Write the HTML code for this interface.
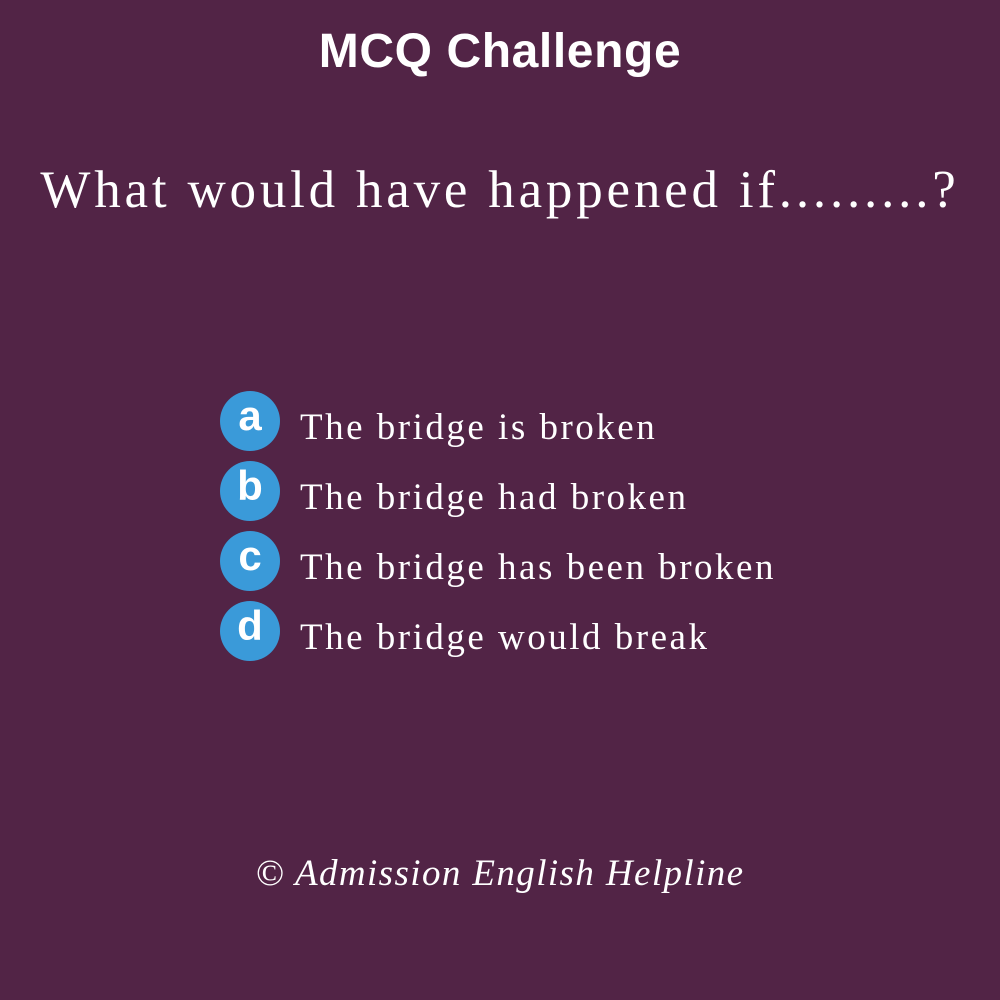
<!DOCTYPE html>
<html><head><style>
html,body{margin:0;padding:0}
body{width:1000px;height:1000px;background:#522446;position:relative;overflow:hidden;color:#fff}
.t{position:absolute;white-space:nowrap}
.h{left:0;width:1000px;text-align:center;top:24px;font:bold 48px "Liberation Sans",sans-serif;letter-spacing:0.6px}
.q{left:0;width:1000px;text-align:center;top:160px;font:53px "Liberation Serif",serif;letter-spacing:3.8px}
.c{position:absolute;left:220px;width:60px;height:60px;border-radius:50%;background:#3a9ad9;color:#fff;font:bold 42px "Liberation Sans",sans-serif;text-align:center;line-height:50px}
.o{left:300px;font:37px "Liberation Serif",serif;letter-spacing:2.5px}
.f{left:0;width:1000px;text-align:center;top:852px;font:italic 37px "Liberation Serif",serif;letter-spacing:1.4px}
</style></head><body>
<div class="t h">MCQ Challenge</div>
<div class="t q">What would have happened if.........?</div>
<div class="c" style="top:391px">a</div>
<div class="c" style="top:461px">b</div>
<div class="c" style="top:531px">c</div>
<div class="c" style="top:601px">d</div>
<div class="t o" style="top:406px">The bridge is broken</div>
<div class="t o" style="top:476px">The bridge had broken</div>
<div class="t o" style="top:546px">The bridge has been broken</div>
<div class="t o" style="top:616px">The bridge would break</div>
<div class="t f">© Admission English Helpline</div>
</body></html>
